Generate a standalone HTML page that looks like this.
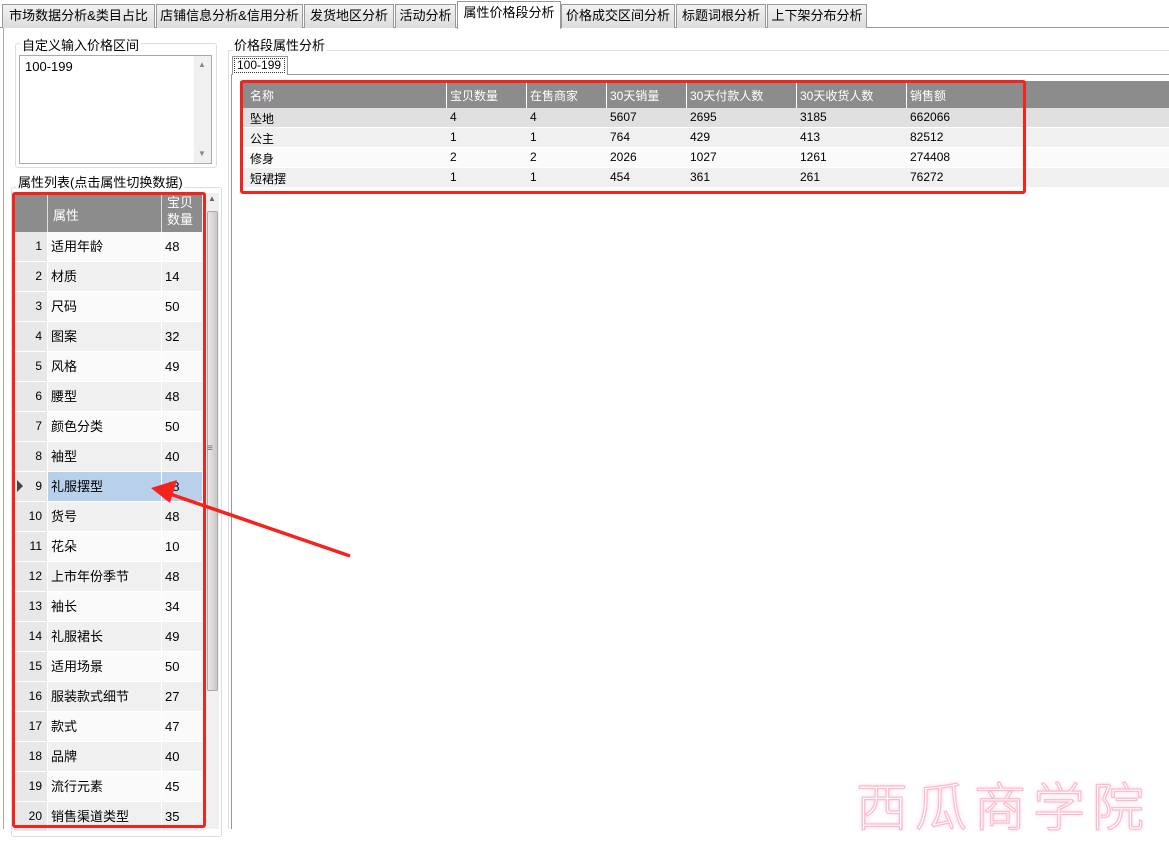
<!DOCTYPE html>
<html><head><meta charset="utf-8"><style>
*{margin:0;padding:0;box-sizing:border-box}
body{width:1169px;height:829px;overflow:hidden;background:#fff;font-family:"Liberation Sans","Noto Sans CJK SC",sans-serif;font-size:12px;color:#000;position:relative}
.a{position:absolute}
.tab{position:absolute;top:4px;height:24px;border:1px solid #999;border-bottom:none;background:linear-gradient(#f2f2f2,#dcdcdc);font-size:13px;line-height:22px;text-align:center;white-space:nowrap}
</style></head><body>
<div class="a" style="left:0;top:27px;width:1169px;height:1px;background:#999"></div>
<div class="tab" style="left:2px;width:153px">市场数据分析&amp;类目占比</div>
<div class="tab" style="left:156px;width:147px">店铺信息分析&amp;信用分析</div>
<div class="tab" style="left:304px;width:90px">发货地区分析</div>
<div class="tab" style="left:395px;width:61px">活动分析</div>
<div class="tab" style="left:457px;top:1px;height:28px;width:104px;background:#fff;z-index:2">属性价格段分析</div>
<div class="tab" style="left:561px;width:114px">价格成交区间分析</div>
<div class="tab" style="left:676px;width:90px">标题词根分析</div>
<div class="tab" style="left:767px;width:100px">上下架分布分析</div>
<div class="a" style="left:3px;top:28px;width:1px;height:801px;background:#aaa"></div>

<div class="a" style="left:15px;top:43px;width:202px;height:125px;border:1px solid #d5dfe5;border-radius:3px"></div>
<div class="a" style="left:20px;top:35px;background:#fff;padding:0 2px;font-size:13px">自定义输入价格区间</div>
<div class="a" style="left:19px;top:55px;width:193px;height:109px;border:1px solid #aaa;background:#fff"></div>
<div class="a" style="left:25px;top:59px;font-size:13px">100-199</div>
<div class="a" style="left:194px;top:56px;width:17px;height:107px;background:#f0f0f0"></div>
<div class="a" style="left:198px;top:60px;font-size:8px;color:#888">▲</div>
<div class="a" style="left:198px;top:149px;font-size:8px;color:#888">▼</div>

<div class="a" style="left:11px;top:187px;width:211px;height:650px;border:1px solid #d5dfe5;border-radius:3px"></div>
<div class="a" style="left:16px;top:172px;background:#fff;padding:0 2px;font-size:13px">属性列表(点击属性切换数据)</div>
<div class="a" style="left:205px;top:193px;width:14px;height:636px;background:#f0f0f0"></div>
<div class="a" style="left:207px;top:211px;width:11px;height:480px;background:linear-gradient(90deg,#e8e8e8,#c8c8c8);border:1px solid #aaa;border-radius:2px"></div>
<div class="a" style="left:208px;top:194px;font-size:8px;color:#666">▲</div>
<div class="a" style="left:207px;top:443px;font-size:10px;color:#666">≡</div>
<div class="a" style="left:14px;top:193px;width:188px;height:39px;background:#8c8c8c"></div>
<div class="a" style="left:47px;top:193px;width:1px;height:39px;background:#ddd"></div>
<div class="a" style="left:161px;top:193px;width:1px;height:39px;background:#ddd"></div>
<div class="a" style="left:53px;top:205px;color:#fff;font-size:13px">属性</div>
<div class="a" style="left:167px;top:194px;color:#fff;font-size:13px;line-height:17px">宝贝<br>数量</div>
<div id="rows"></div>
<div class="a" style="left:12px;top:192px;width:194px;height:636px;border:3px solid #f5231c;border-radius:3px"></div>

<div class="a" style="left:228px;top:50px;width:1px;height:779px;background:#d5dfe5"></div>
<div class="a" style="left:228px;top:50px;width:941px;height:1px;background:#d5dfe5"></div>
<div class="a" style="left:232px;top:35px;background:#fff;padding:0 2px;font-size:13px">价格段属性分析</div>
<div class="a" style="left:231px;top:74px;width:938px;height:1px;background:#999"></div>
<div class="a" style="left:231px;top:74px;width:1px;height:755px;background:#999"></div>
<div class="a" style="left:232px;top:56px;width:56px;height:19px;border:1px solid #999;border-bottom:none;background:#fff"></div>
<div class="a" style="left:234px;top:58px;width:51px;height:15px;border:1px dotted #333;font-size:12px;line-height:13px;padding-left:2px">100-199</div>
<div class="a" style="left:240px;top:81px;width:929px;height:27px;background:#8c8c8c"></div>
<div id="rg"></div>
<div class="a" style="left:240px;top:80px;width:786px;height:114px;border:3px solid #f5231c;border-radius:3px"></div>

<div class="a" style="left:856px;top:772px;font-size:52px;color:#fff;letter-spacing:7px;-webkit-text-stroke:1.2px #f8bccd;text-shadow:0 0 3px #fbd3df,0 0 6px #fde0e8;font-family:'Noto Sans CJK SC',sans-serif;line-height:64px;font-weight:300">西瓜商学院</div>

<svg class="a" style="left:0;top:0" width="1169" height="829"><line x1="350" y1="556" x2="170" y2="494" stroke="#f5231c" stroke-width="3.5"/><polygon points="151,488 177,480 170,503" fill="#f5231c"/></svg>

<script>
var d=[["适用年龄",48],["材质",14],["尺码",50],["图案",32],["风格",49],["腰型",48],["颜色分类",50],["袖型",40],["礼服摆型",48],["货号",48],["花朵",10],["上市年份季节",48],["袖长",34],["礼服裙长",49],["适用场景",50],["服装款式细节",27],["款式",47],["品牌",40],["流行元素",45],["销售渠道类型",35]];
var h="";
d.forEach(function(r,i){var y=232+i*30;var sel=i==8;var bg=sel?"#b8d0ea":(i%2?"#f0f0f0":"#fafafa");
h+='<div class="a" style="left:14px;top:'+y+'px;width:33px;height:29px;background:#e8e8e8;text-align:right;padding-right:5px;line-height:29px;font-size:12px">'+(i+1)+'</div>';
if(sel)h+='<div class="a" style="left:17px;top:'+(y+8)+'px;width:0;height:0;border-left:6px solid #444;border-top:6px solid transparent;border-bottom:6px solid transparent"></div>';
h+='<div class="a" style="left:48px;top:'+y+'px;width:113px;height:29px;background:'+bg+';line-height:29px;padding-left:3px;font-size:13px">'+r[0]+'</div>';
h+='<div class="a" style="left:162px;top:'+y+'px;width:40px;height:29px;background:'+bg+';line-height:29px;padding-left:3px;font-size:13px">'+r[1]+'</div>';});
document.getElementById("rows").innerHTML=h;
var cols=[246,446,526,606,686,796,906,1025];
var hd=["名称","宝贝数量","在售商家","30天销量","30天付款人数","30天收货人数","销售额"];
var rs=[["坠地",4,4,5607,2695,3185,662066],["公主",1,1,764,429,413,82512],["修身",2,2,2026,1027,1261,274408],["短裙摆",1,1,454,361,261,76272]];
var g="";
hd.forEach(function(t,j){g+='<div class="a" style="left:'+(cols[j]+4)+'px;top:87px;color:#fff;font-size:12px">'+t+'</div>';if(j>0)g+='<div class="a" style="left:'+cols[j]+'px;top:81px;width:1px;height:107px;background:#fff"></div>';});
rs.forEach(function(r,i){var y=108+i*20;var bg=["#e0e0e0","#f0f0f0","#fafafa","#f0f0f0"][i];
g+='<div class="a" style="left:240px;top:'+y+'px;width:929px;height:19px;background:'+bg+'"></div>';
r.forEach(function(v,j){g+='<div class="a" style="left:'+(cols[j]+4)+'px;top:'+(y+2)+'px;font-size:12px">'+v+'</div>';});});
g+='<div class="a" style="left:240px;top:108px;width:3px;height:19px;background:#3a8ee6"></div>';
document.getElementById("rg").innerHTML=g;
</script>
</body></html>
